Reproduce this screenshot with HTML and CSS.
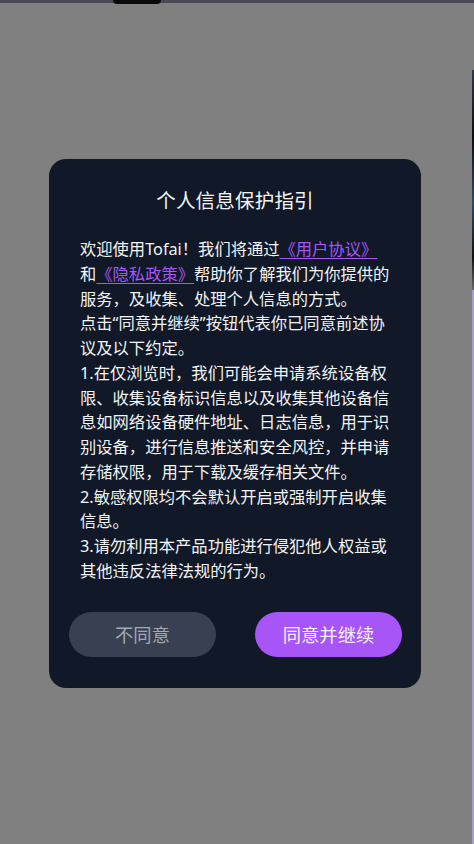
FILE: index.html
```html
<!DOCTYPE html>
<html lang="zh-CN">
<head>
<meta charset="utf-8">
<title>个人信息保护指引</title>
<link rel="stylesheet" href="styles.css">
</head>
<body>
<div class="topbar"><span class="notch"></span></div>
<div class="edge"><span class="edge-dark"></span><span class="edge-light"></span></div>
<main class="stage">
  <section class="dialog">
    <h1 class="title">个人信息保护指引</h1>
    <div class="body">
      <p>欢迎使用Tofai！我们将通过<a class="link" href="#">《用户协议》</a>和<a class="link" href="#">《隐私政策》</a>帮助你了解我们为你提供的服务，及收集、处理个人信息的方式。</p>
      <p>点击“同意并继续”按钮代表你已同意前述协议及以下约定。</p>
      <p>1.在仅浏览时，我们可能会申请系统设备权限、收集设备标识信息以及收集其他设备信息如网络设备硬件地址、日志信息，用于识别设备，进行信息推送和安全风控，并申请存储权限，用于下载及缓存相关文件。</p>
      <p>2.敏感权限均不会默认开启或强制开启收集信息。</p>
      <p>3.请勿利用本产品功能进行侵犯他人权益或其他违反法律法规的行为。</p>
    </div>
    <div class="actions">
      <button class="btn btn-decline">不同意</button>
      <button class="btn btn-accept">同意并继续</button>
    </div>
  </section>
</main>
</body>
</html>
```
FILE: styles.css
```css
html, body {
  margin: 0;
  padding: 0;
}
body {
  width: 474px;
  height: 844px;
  background: #808080;
  font-family: "Noto Sans", "Noto Sans CJK SC", sans-serif;
  overflow: hidden;
  position: relative;
}
.topbar {
  position: absolute;
  left: 0;
  top: 0;
  width: 100%;
  height: 3px;
  background: #4a4956;
}
.notch {
  position: absolute;
  left: 113px;
  top: 0;
  width: 48px;
  height: 4px;
  background: #0a0a0c;
  border-radius: 0 0 10px 10px;
}
.edge {
  position: absolute;
  right: 0;
  top: 0;
  width: 2px;
  height: 844px;
  display: flex;
  flex-direction: column;
}
.edge-dark {
  margin-top: 70px;
  height: 220px;
  background: linear-gradient(#2a3a48, #0c0c10 30%, #2c4a60 60%, #111 85%, #666 100%);
}
.edge-light {
  flex: 1;
  background: #a29fd0;
}
.stage {
  padding: 159px 0 0 49px;
}
.dialog {
  width: 372px;
  box-sizing: border-box;
  background: #111827;
  border-radius: 17px;
  padding: 28px 0 31px;
}
.title {
  margin: 0;
  text-align: center;
  color: #f3f4f6;
  font-size: 19.5px;
  font-weight: 400;
  line-height: 28px;
  letter-spacing: 0.2px;
}
.body {
  margin-top: 22px;
  padding: 0 30px 0 31px;
  color: #f3f4f6;
  font-size: 16.3px;
  line-height: 24.75px;
}
.body p {
  margin: 0;
}
.link {
  color: #a855f7;
  text-decoration: underline;
  text-underline-offset: 3px;
  text-decoration-thickness: 1px;
}
.actions {
  margin-top: 28px;
  padding: 0 19px 0 20px;
  display: flex;
  justify-content: space-between;
}
.btn {
  width: 147px;
  height: 45px;
  border: none;
  border-radius: 23px;
  font-family: "Noto Sans", "Noto Sans CJK SC", sans-serif;
  font-size: 18.3px;
  padding: 0;
}
.btn-decline {
  background: #374151;
  color: #a3a8b3;
}
.btn-accept {
  background: #a855f7;
  color: #f5f0ff;
}
```
